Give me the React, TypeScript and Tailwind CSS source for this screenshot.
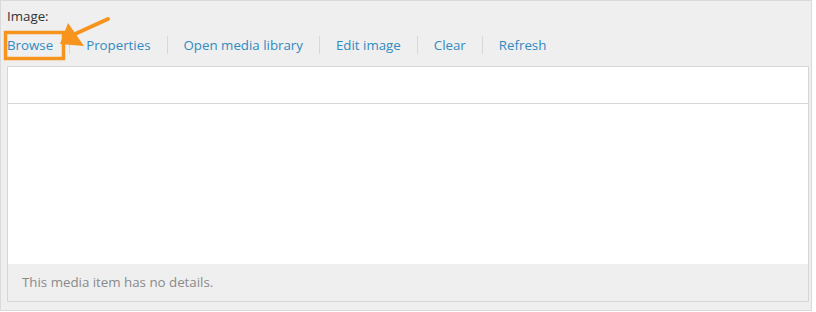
import React from 'react';

const links = ['Browse', 'Properties', 'Open media library', 'Edit image', 'Clear', 'Refresh'];

const App = () => {
  return (
    <div className="relative w-[812px] h-[311px] border border-[#dadada] bg-[#efefef] pt-[6px] pl-[6px] font-['Open_Sans',sans-serif] text-[13.3px]">
      <div className="leading-[18px] text-[#333333]">Image:</div>

      <div className="mt-[11px] flex h-[18px] items-center">
        {links.map((label, i) => (
          <React.Fragment key={label}>
            {i > 0 && <span className="mx-[16px] h-[18px] border-l border-[#d8d8d8]" />}
            <a className="leading-[18px] text-[#2f8bc2] cursor-pointer">{label}</a>
          </React.Fragment>
        ))}
      </div>

      <div className="mt-[12px] w-[802px] border border-[#d6d6d6] bg-white">
        <div className="h-[37px] border-b border-[#d6d6d6]" />
        <div className="h-[160px]" />
        <div className="flex h-[37px] items-center bg-[#efefef] pl-[14px] text-[#8a8a8a]">
          This media item has no details.
        </div>
      </div>

      {/* annotation */}
      <svg className="pointer-events-none absolute left-0 top-0" width="120" height="70" viewBox="0 0 120 70">
        <rect x="4.5" y="31.5" width="58" height="26" fill="none" stroke="#f7941d" strokeWidth="3.5" />
        <line x1="107" y1="18" x2="74" y2="33" stroke="#f7941d" strokeWidth="4" strokeLinecap="round" />
        <polygon points="59,43 67,22 83,45" fill="#f7941d" />
      </svg>
    </div>
  );
};

export default App;
